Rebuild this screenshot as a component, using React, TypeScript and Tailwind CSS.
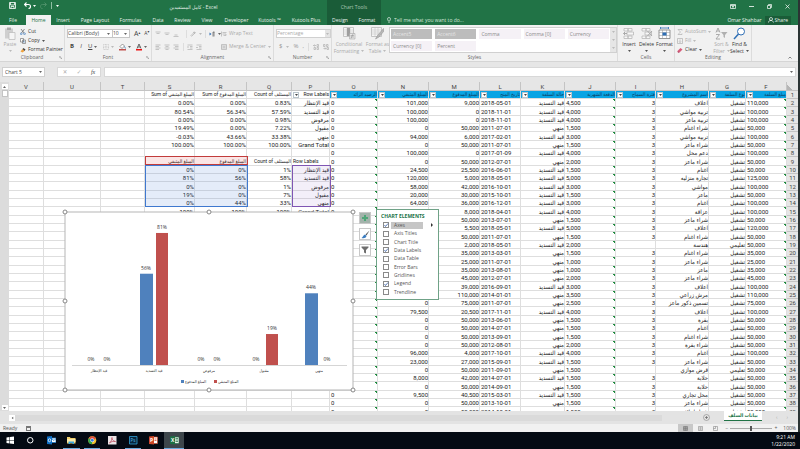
import type { ReactNode } from "react";
import clsx from "clsx";

const PAID = "قيد التسديد";
const DONE = "منهي";
const WORK = "تشغيل";
const STUDY = "تعليمي";

// remaining, paid, granted on, state, monthly, grace, project, type, amount
const loans: string[][] = [
  ["101,000", "9,000", "2018-05-01", PAID, "4,500", "3", "اعلاف", WORK, "110,000"],
  ["100,000", "0", "2018-11-01", PAID, "4,000", "3", "تربية مواشي", WORK, "100,000"],
  ["100,000", "0", "2018-11-01", PAID, "4,000", "3", "تربية ماعز", WORK, "100,000"],
  ["0", "50,000", "2011-07-01", DONE, "1,500", "3", "شراء اغنام", WORK, "50,000"],
  ["94,000", "6,000", "2017-02-01", PAID, "3,000", "3", "تربية مواشي", WORK, "100,000"],
  ["0", "50,000", "2011-07-01", DONE, "1,500", "3", "شراء ماعز", WORK, "50,000"],
  ["100,000", "0", "2017-01-09", PAID, "4,000", "3", "دعم محل", WORK, "100,000"],
  ["0", "50,000", "2012-07-01", DONE, "2,000", "3", "شراء ماعز", WORK, "50,000"],
  ["24,500", "25,500", "2016-06-01", PAID, "1,500", "3", "اغنام", WORK, "50,000"],
  ["120,000", "5,000", "2018-05-01", PAID, "5,000", "3", "تجارة منزليه", WORK, "125,000"],
  ["58,000", "42,000", "2016-10-01", PAID, "3,000", "3", "مواشي", WORK, "100,000"],
  ["20,000", "30,000", "2015-10-01", PAID, "1,500", "3", "ماعز", WORK, "50,000"],
  ["64,000", "36,000", "2016-12-01", PAID, "3,000", "3", "اغنام", WORK, "100,000"],
  ["92,000", "8,000", "2018-04-01", PAID, "4,000", "3", "عزاقة", WORK, "100,000"],
  ["0", "50,000", "2013-07-01", DONE, "1,500", "3", "شراء ماعز", WORK, "50,000"],
  ["114,500", "5,500", "2018-05-01", PAID, "5,000", "3", "اعلاف", WORK, "120,000"],
  ["0", "50,000", "2011-07-01", DONE, "1,500", "3", "شراء اغنام", WORK, "50,000"],
  ["48,000", "2,000", "2018-05-01", PAID, "2,000", "", "هندسة", STUDY, "50,000"],
  ["0", "35,000", "2013-03-01", DONE, "1,500", "3", "شراء اغنام", WORK, "35,000"],
  ["0", "25,000", "2011-07-01", DONE, "1,000", "3", "شراء ماعز", WORK, "25,000"],
  ["0", "35,000", "2013-08-01", DONE, "1,000", "3", "ماعز", WORK, "35,000"],
  ["0", "45,000", "2012-07-01", DONE, "2,000", "3", "شراء ماعز", WORK, "45,000"],
  ["61,000", "39,000", "2016-09-01", PAID, "3,000", "3", "اعلاف", WORK, "100,000"],
  ["0", "110,000", "2014-01-01", DONE, "3,500", "3", "مرش زراعي", WORK, "110,000"],
  ["0", "75,000", "2011-07-01", DONE, "2,500", "3", "تسمين ذكور ماعز", WORK, "75,000"],
  ["79,500", "20,500", "2017-11-01", PAID, "4,000", "3", "اعلاف", WORK, "100,000"],
  ["0", "50,000", "2013-06-01", DONE, "1,500", "3", "بقرة", WORK, "50,000"],
  ["0", "50,000", "2014-07-01", DONE, "1,500", "3", "اغنام", WORK, "50,000"],
  ["0", "50,000", "2013-09-01", DONE, "1,500", "3", "شراء اغنام", WORK, "50,000"],
  ["0", "50,000", "2012-08-01", DONE, "2,000", "3", "شراء بقرة", WORK, "50,000"],
  ["96,000", "4,000", "2017-10-01", PAID, "4,000", "3", "اغنام", WORK, "100,000"],
  ["23,000", "27,000", "2015-09-01", PAID, "1,500", "3", "شراء ماعز", WORK, "50,000"],
  ["0", "50,000", "2011-09-01", DONE, "1,500", "", "قرض موازي", STUDY, "50,000"],
  ["8,000", "42,000", "2014-07-01", PAID, "1,500", "3", "حلابة", WORK, "50,000"],
  ["0", "50,000", "2014-09-01", DONE, "1,500", "3", "حلابة", WORK, "50,000"],
  ["9,500", "40,500", "2015-03-01", PAID, "1,500", "3", "محل تجاري", WORK, "50,000"],
  ["0", "50,000", "2013-10-01", DONE, "1,500", "3", "شراء ماعز", WORK, "50,000"],
  ["0", "50,000", "2014-10-01", DONE, "1,500", "3", "شراء اعلاف", WORK, "50,000"],
];

// columns S, R, Q, P keyed by sheet row
const pivot: Record<number, string[]> = {
  1: ["Sum of المبلغ المتبقي", "Sum of المبلغ المدفوع", "Count of المستلف", "Row Labels"],
  2: ["0.00%", "0.00%", "0.83%", "قيد الإنتظار"],
  3: ["80.54%", "56.34%", "57.59%", "قيد التسديد"],
  4: ["0.00%", "0.00%", "0.98%", "مرفوض"],
  5: ["19.49%", "0.00%", "7.22%", "مقبول"],
  6: ["-0.03%", "43.66%", "33.38%", "منهي"],
  7: ["100.00%", "100.00%", "100.00%", "Grand Total"],
  9: ["المبلغ المتبقي", "المبلغ المدفوع", "Count of المستلف", "Row Labels"],
  10: ["0%", "0%", "1%", "قيد الإنتظار"],
  11: ["81%", "56%", "58%", "قيد التسديد"],
  12: ["0%", "0%", "1%", "مرفوض"],
  13: ["19%", "0%", "7%", "مقبول"],
  14: ["0%", "44%", "33%", "منهي"],
  15: ["100%", "100%", "100%", "Grand Total"],
};

const headers = [
  "الرصيد الزائد",
  "المبلغ المتبقي",
  "المبلغ المدفوع",
  "تاريخ المنح",
  "حالة السلفة",
  "الدفعة الشهرية",
  "فترة السماح",
  "اسم المشروع",
  "نوع السلفة",
  "مبلغ السلفة",
];

const columns = [
  { id: "V", width: "w-auto" },
  { id: "U", width: "w-[57px]" },
  { id: "T", width: "w-[44px]" },
  { id: "S", width: "w-[50px]" },
  { id: "R", width: "w-[52px]" },
  { id: "Q", width: "w-[45px]" },
  { id: "P", width: "w-[38px]" },
  { id: "O", width: "w-[48px]" },
  { id: "N", width: "w-[51px]" },
  { id: "M", width: "w-[51px]" },
  { id: "L", width: "w-[41px]" },
  { id: "K", width: "w-[44px]" },
  { id: "J", width: "w-[51px]" },
  { id: "I", width: "w-[40px]" },
  { id: "H", width: "w-[53px]" },
  { id: "G", width: "w-[37px]" },
  { id: "F", width: "w-[41px]" },
];

const tabs = [
  { label: "File", width: "w-[26px]" },
  { label: "Home", width: "w-[25px]" },
  { label: "Insert", width: "w-[24px]" },
  { label: "Page Layout", width: "w-[40px]" },
  { label: "Formulas", width: "w-[31px]" },
  { label: "Data", width: "w-[24px]" },
  { label: "Review", width: "w-[25px]" },
  { label: "View", width: "w-[24px]" },
  { label: "Developer", width: "w-[35px]" },
  { label: "Kutools ™", width: "w-[31px]" },
  { label: "Kutools Plus", width: "w-[42px]" },
  { label: "Design", width: "w-[26px]" },
  { label: "Format", width: "w-[28px]" },
];

function Svg({ w, h, box, label, children }: { w: number; h: number; box: string; label?: string; children: ReactNode }) {
  return (
    <svg width={w} height={h} viewBox={box} fill="none" aria-label={label} aria-hidden={label ? undefined : true} className="shrink-0">
      {children}
    </svg>
  );
}

function Caret({ color = "#666" }: { color?: string }) {
  return (
    <Svg w={3} h={2} box="0 0 6 4">
      <path d="M0 0h6L3 4z" fill={color} />
    </Svg>
  );
}

function TitleBar() {
  return (
    <div className="flex h-[15px] items-stretch text-white">
      <div className="flex w-[327px] items-center">
        <div className="flex w-[60px] items-center gap-1 pb-1 pl-[9px]">
          <button aria-label="Save">
            <Svg w={7} h={7} box="0 0 14 14">
              <path d="M1 1h12v12H1zM3 1v5h8V1M4 13V9h6v4" stroke="#fff" strokeWidth="1.6" />
            </Svg>
          </button>
          <button aria-label="Undo" className="ml-1 flex items-center gap-0.5">
            <Svg w={7} h={7} box="0 0 14 14">
              <path d="M5 1L1 5l4 4M1.500 5H9c3 0 4 2 4 4s-1 4-4 4" stroke="#fff" strokeWidth="2.200" />
            </Svg>
            <Caret color="#fff" />
          </button>
          <button aria-label="Redo" className="flex items-center gap-0.5">
            <Svg w={7} h={7} box="0 0 14 14">
              <path d="M9 1l4 4-4 4M12.500 5H5C2 5 1 7 1 9s1 4 4 4" stroke="#4c9068" strokeWidth="2" />
            </Svg>
          </button>
          <span className="h-[7px] w-px bg-[#8fbfa2]" />
          <Caret color="#fff" />
        </div>
        <h1 className="flex-1 text-center text-[#e3efe7]">كامل المستفيدين - Excel</h1>
      </div>
      <div className="flex w-[54px] items-center justify-center bg-[#1a5c38] text-[#a9c9b5]">Chart Tools</div>
      <div className="ml-auto flex items-center gap-[13px] pr-[8px] pb-[3px]">
        <button aria-label="Ribbon display options">
          <Svg w={6} h={5} box="0 0 12 10">
            <path d="M1 1h10v8H1zM1 3h10M6 9V5M4 6l2-2 2 2" stroke="#fff" strokeWidth="1.400" />
          </Svg>
        </button>
        <button aria-label="Minimize">
          <Svg w={5} h={5} box="0 0 10 10">
            <path d="M0 5h10" stroke="#fff" strokeWidth="1.600" />
          </Svg>
        </button>
        <button aria-label="Restore">
          <Svg w={5} h={5} box="0 0 10 10">
            <path d="M1 3h6v6H1zM3 3V1h6v6H7" stroke="#fff" strokeWidth="1.400" />
          </Svg>
        </button>
        <button aria-label="Close">
          <Svg w={5} h={5} box="0 0 10 10">
            <path d="M1 1l8 8M9 1L1 9" stroke="#fff" strokeWidth="1.400" />
          </Svg>
        </button>
      </div>
    </div>
  );
}

function TabBar() {
  return (
    <nav className="flex h-[10px] items-stretch whitespace-nowrap text-[#e8f2ec]">
      {tabs.map((tab, i) => (
        <button
          key={tab.label}
          className={clsx(tab.width, tab.label === "Home" && "bg-[#f1f1f1] text-[#217346]", i > 10 && "bg-[#1a5c38]")}
        >
          {tab.label}
        </button>
      ))}
      <label className="ml-[6px] flex items-center gap-[3px]">
        <Svg w={4} h={6} box="0 0 8 12">
          <path d="M2.500 8C2.500 6.500 1 6 1 4a3 3 0 016 0c0 2-1.500 2.500-1.500 4zM2.500 10.500h3" stroke="#fff" strokeWidth="1.200" />
        </Svg>
        <input placeholder="Tell me what you want to do..." className="w-[80px] bg-transparent placeholder:text-[#d4e6da] outline-none" />
      </label>
      <div className="ml-auto flex items-center gap-[3px] pr-[7px]">
        <span>Omar Shahbar</span>
        <button className="flex h-[9px] items-center gap-px bg-[#1a5c38] px-[3px]">
          <Svg w={6} h={6} box="0 0 12 12">
            <circle cx="6" cy="4" r="3" stroke="#fff" strokeWidth="1.400" />
            <path d="M1 11c0-3 2-4 5-4 2 0 4 1 5 4" stroke="#fff" strokeWidth="1.400" />
          </Svg>
          Share
        </button>
      </div>
    </nav>
  );
}

function Group({ label, width, launcher, children }: { label: string; width: string; launcher?: boolean; children: ReactNode }) {
  return (
    <section className={clsx("flex flex-col border-r border-[#dcdcdc]", width)}>
      <div className="flex flex-1 items-start pt-[2px]">{children}</div>
      <div className="relative h-[7px] text-center text-[#666]">
        {label}
        {launcher && (
          <span className="absolute right-[2px] top-[2px]">
            <Svg w={3} h={3} box="0 0 6 6">
              <path d="M0.500 4V0.500H4M2 2l3.500 3.500M5.500 3v2.500H3" stroke="#888" />
            </Svg>
          </span>
        )}
      </div>
    </section>
  );
}

function Tool({ icon, label, muted, caret }: { icon: ReactNode; label: string; muted?: boolean; caret?: boolean }) {
  return (
    <button className={clsx("flex h-[9px] items-center gap-[2px] whitespace-nowrap", muted ? "text-[#aaa]" : "text-[#333]")}>
      {icon}
      {label}
      {caret && <Caret color={muted ? "#bbb" : "#555"} />}
    </button>
  );
}

function BigTool({ icon, lines, muted, width }: { icon: ReactNode; lines: string[]; muted?: boolean; width: string }) {
  return (
    <button className={clsx("flex flex-col items-center leading-[7px] whitespace-nowrap", width, muted ? "text-[#aaa]" : "text-[#333]")}>
      <span className="mb-px">{icon}</span>
      {lines[0]}
      <span className="flex h-[6px] items-center gap-[2px]">
        {lines[1]}
        <Caret color={muted ? "#bbb" : "#555"} />
      </span>
    </button>
  );
}

function LinesIcon({ d }: { d: string }) {
  return (
    <Svg w={6} h={6} box="0 0 12 12">
      <path d={d} stroke="#b0b0b0" strokeWidth="1.400" />
    </Svg>
  );
}

function CellsIcon({ accent, mark }: { accent: string; mark: string }) {
  return (
    <Svg w={12} h={13} box="0 0 24 26">
      <path d="M2 3h8v5H2zM10 3h8v5h-8zM2 18h8v5H2zM10 18h8v5h-8zM8 10h13v6H8z" stroke="#b5b5b5" strokeWidth="1.500" fill="#f7f7f7" />
      <path d={mark} stroke={accent} strokeWidth="2" />
    </Svg>
  );
}

function TableIcon({ overlay }: { overlay: ReactNode }) {
  return (
    <Svg w={13} h={13} box="0 0 26 26">
      <path d="M1 1h20v18H1z" fill="#f6f6f6" stroke="#b5b5b5" strokeWidth="1.500" />
      <path d="M1 6h20M1 10h20M1 14h20M8 1v18M14 1v18" stroke="#bdbdbd" />
      {overlay}
    </Svg>
  );
}

function Ribbon() {
  return (
    <div className="flex h-[37px] border-b border-[#d5d5d5] bg-[#f1f1f1]">
      <Group label="Clipboard" width="w-[65px]" launcher>
        <BigTool
          width="w-[20px]"
          muted
          lines={["Paste", ""]}
          icon={
            <Svg w={12} h={13} box="0 0 24 26">
              <path d="M2 3h16v20H2z" fill="#cfcfcf" />
              <path d="M6 1h8v5H6z" fill="#a8a8a8" />
              <path d="M10 11h12v14H10z" fill="#f5f5f5" stroke="#bbb" strokeWidth="1.500" />
            </Svg>
          }
        />
        <div className="flex flex-col">
          <Tool
            label="Cut"
            icon={
              <Svg w={6} h={6} box="0 0 12 12">
                <path d="M2 0l6 8M9 0L3 8" stroke="#555" strokeWidth="1.300" />
                <circle cx="2.500" cy="9.500" r="1.800" stroke="#2f6fb5" strokeWidth="1.200" />
                <circle cx="9" cy="9.500" r="1.800" stroke="#2f6fb5" strokeWidth="1.200" />
              </Svg>
            }
          />
          <Tool
            label="Copy"
            caret
            icon={
              <Svg w={6} h={6} box="0 0 12 12">
                <path d="M1 1h6v7H1zM5 4h6v7H5z" fill="#fff" stroke="#666" strokeWidth="1.200" />
                <path d="M6.500 6.500h3M6.500 8.500h3" stroke="#2f6fb5" />
              </Svg>
            }
          />
          <Tool
            label="Format Painter"
            icon={
              <Svg w={6} h={6} box="0 0 12 12">
                <path d="M1 9l4-5 4 4-4 3z" fill="#f0a23c" />
                <path d="M5 4l2-2 4 3-2 3z" fill="#444" />
              </Svg>
            }
          />
        </div>
      </Group>

      <Group label="Font" width="w-[87px]" launcher>
        <div className="flex flex-col gap-[4px] pt-[2px] pl-[2px]">
          <div className="flex items-center">
            <div className="flex h-[9px] w-[46px] items-center border border-[#c6c6c6] bg-white pr-[2px]">
              <select aria-label="Font name" className="h-[7px] min-w-0 flex-1 appearance-none text-[#444]">
                <option>Calibri (Body)</option>
              </select>
              <Caret />
            </div>
            <div className="-ml-px flex h-[9px] w-[18px] items-center border border-[#c6c6c6] bg-white pr-[2px]">
              <select aria-label="Font size" className="h-[7px] min-w-0 flex-1 appearance-none text-[#444]">
                <option>10</option>
              </select>
              <Caret />
            </div>
            <button className="ml-1 text-[7px] text-[#444]">A<sup className="text-[4px]">▴</sup></button>
            <button className="ml-1 text-[#444]">A<sup className="text-[4px]">▾</sup></button>
          </div>
          <div className="flex h-[9px] items-center gap-[5px] pl-[3px] text-[6px] text-[#444]">
            <button className="font-bold">B</button>
            <button className="w-[4px] italic">I</button>
            <button className="flex items-center gap-[2px] underline">U<Caret /></button>
            <button aria-label="Borders" className="ml-px flex items-center gap-[2px]">
              <Svg w={6} h={6} box="0 0 12 12">
                <path d="M1 1h10v10H1zM6 1v10M1 6h10" stroke="#b5b5b5" strokeDasharray="2 1" />
              </Svg>
              <Caret color="#bbb" />
            </button>
            <button aria-label="Fill color" className="flex items-center gap-[2px]">
              <Svg w={7} h={8} box="0 0 14 16">
                <path d="M2 7l5-5 4 4-5 5z" fill="#fff" stroke="#666" strokeWidth="1.300" />
                <path d="M11 7l2 4" stroke="#2f6fb5" strokeWidth="1.500" />
                <path d="M0 12h14v3H0z" fill="#c0504d" />
              </Svg>
              <Caret />
            </button>
            <button aria-label="Font color" className="flex items-center gap-[2px]">
              <Svg w={6} h={8} box="0 0 12 16">
                <path d="M2 11l4-9 4 9M3.500 8h5" stroke="#444" strokeWidth="1.600" />
                <path d="M0 12h12v3H0z" fill="#e11" />
              </Svg>
              <Caret />
            </button>
          </div>
        </div>
      </Group>

      <Group label="Alignment" width="w-[122px]" launcher>
        <div className="flex flex-col gap-[4px] pt-[2px] pl-[3px]">
          <div className="flex h-[9px] items-center gap-[3px]">
            <LinesIcon d="M1 2h10M3 5h6" />
            <LinesIcon d="M1 4h10M3 7h6" />
            <LinesIcon d="M3 8h6M1 11h10" />
            <span className="ml-1 h-[8px] w-px bg-[#ddd]" />
            <LinesIcon d="M1 10l8-8M3 11l8-8M6 3l4-1-1 4" />
            <Caret color="#bbb" />
            <span className="h-[8px] w-px bg-[#ddd]" />
            <Svg w={6} h={6} box="0 0 12 12">
              <path d="M1 3l4 3-4 3z" fill="#2f6fb5" />
              <path d="M8 2v9M10 2v9M11 2H8" stroke="#555" strokeWidth="1.300" />
            </Svg>
            <Caret />
          </div>
          <div className="flex h-[9px] items-center gap-[3px]">
            <LinesIcon d="M1 2h10M1 5h7M1 8h10M1 11h7" />
            <LinesIcon d="M1 2h10M3 5h6M1 8h10M3 11h6" />
            <LinesIcon d="M1 2h10M4 5h7M1 8h10M4 11h7" />
            <span className="ml-px h-[8px] w-px bg-[#ddd]" />
            <LinesIcon d="M1 2h10M6 5h5M6 8h5M1 11h10M4 6H0" />
            <LinesIcon d="M1 2h10M6 5h5M6 8h5M1 11h10M0 7h4" />
          </div>
        </div>
        <div className="ml-auto flex w-[54px] flex-col gap-[4px] pt-[2px]">
          <Tool muted label="Wrap Text" icon={<LinesIcon d="M1 1v10M3 3h8M3 6h7v3H5" />} />
          <Tool muted caret label="Merge & Center" icon={<LinesIcon d="M1 1h10v10H1zM1 4h10M1 8h10M4 6h4" />} />
        </div>
      </Group>

      <Group label="Number" width="w-[58px]" launcher>
        <div className="flex w-full flex-col gap-[4px] pt-[2px] pl-[2px]">
          <div className="flex items-center border border-[#d0d0d0] bg-white">
            <select aria-label="Number format" disabled className="h-[7px] min-w-0 flex-1 appearance-none text-[#aaa] opacity-100">
              <option>Percentage</option>
            </select>
            <span className="flex h-[7px] w-[5px] items-center justify-center bg-[#e4e4e4]"><Caret color="#bbb" /></span>
          </div>
          <div className="flex h-[9px] items-center gap-[4px] pl-[3px] text-[6px] text-[#999]">
            <button>$</button>
            <Caret color="#bbb" />
            <button>%</button>
            <button>,</button>
            <span className="h-[8px] w-px bg-[#ddd]" />
            <button aria-label="Increase decimal">
              <LinesIcon d="M6 3H1M3 1L1 3l2 2M8 1h3v4H8zM2 7h3v4H2zM8 7h3v4H8z" />
            </button>
            <button aria-label="Decrease decimal">
              <LinesIcon d="M1 1h3v4H1zM7 1h3v4H7zM1 9h5M4 7l2 2-2 2M8 7h3v4H8z" />
            </button>
          </div>
        </div>
      </Group>

      <Group label="Styles" width="flex-1">
        <BigTool
          muted
          width="w-[34px]"
          lines={["Conditional", "Formatting"]}
          icon={
            <TableIcon
              overlay={
                <>
                  <path d="M8 2h6v16H8z" fill="#9e9e9e" />
                  <path d="M13 13h11v11H13z" fill="#e8e8e8" stroke="#999" />
                  <path d="M15 17h7M15 20h7M20 14l-4 9" stroke="#888" />
                </>
              }
            />
          }
        />
        <BigTool
          muted
          width="w-[23px]"
          lines={["Format as", "Table"]}
          icon={<TableIcon overlay={<path d="M25 3L13 17l-4 7 7-4L26 8z" fill="#b8b8b8" stroke="#8e8e8e" />} />}
        />
        <div className="flex flex-1 border border-[#d0d0d0] bg-white">
          <div className="grid flex-1 grid-cols-5 gap-x-[3px] gap-y-[2px] p-px text-[#8a8a8a]">
            {["Accent5", "Accent6", "Comma", "Comma [0]", "Currency", "Currency [0]", "Percent"].map((name, i) => (
              <button key={name} className={clsx("h-[10px] px-[2px] text-left", i < 2 ? "bg-[#bcbcbc] text-[#e6e6e6]" : "bg-[#f5f1f6]")}>
                {name}
              </button>
            ))}
          </div>
          <div className="flex w-[6px] flex-col items-center justify-around bg-[#e6e6e6]">
            <Caret color="#bbb" />
            <Caret color="#bbb" />
            <Caret color="#bbb" />
          </div>
        </div>
      </Group>

      <Group label="Cells" width="w-[57px]">
        <div className="flex pl-[3px]">
          <BigTool width="w-[16px]" lines={["Insert", ""]} icon={<CellsIcon accent="#a9a9a9" mark="M8 13H1M4 10l-3 3 3 3" />} />
          <BigTool width="w-[19px]" lines={["Delete", ""]} icon={<CellsIcon accent="#a9a9a9" mark="M13 8l9 10M22 8l-9 10" />} />
          <BigTool
            width="w-[17px]"
            lines={["Format", ""]}
            icon={
              <Svg w={13} h={13} box="0 0 26 26">
                <path d="M2 6h22v17H2z" fill="#fff" stroke="#777" strokeWidth="1.500" />
                <path d="M2 11h22M2 17h22M9 6v17M17 6v17" stroke="#999" />
                <path d="M9 11h8v6H9z" fill="#2f6fb5" />
                <path d="M5 2h16M5 0v4M21 0v4" stroke="#2f6fb5" strokeWidth="1.600" />
              </Svg>
            }
          />
        </div>
      </Group>

      <Group label="Editing" width="w-[77px]">
        <div className="flex w-[37px] flex-col pl-[2px]">
          <Tool muted caret label="AutoSum" icon={<LinesIcon d="M10 3V1H2l5 5-5 5h8V9" />} />
          <Tool muted caret label="Fill" icon={<LinesIcon d="M1 1h10v10H1zM6 3v6M4 7l2 2 2-2" />} />
          <Tool
            caret
            label="Clear"
            icon={
              <Svg w={6} h={6} box="0 0 12 12">
                <path d="M1 8l6-6 4 3-6 6H2z" fill="#d65b79" />
                <path d="M1 8l4 3H2z" fill="#9c3b5a" />
              </Svg>
            }
          />
        </div>
        <BigTool
          muted
          width="w-[19px]"
          lines={["Sort &", "Filter"]}
          icon={
            <Svg w={13} h={13} box="0 0 26 26">
              <path d="M2 11L6 2l4 9M3.500 8h5M2 15h7l-7 9h8" stroke="#a3a3a3" strokeWidth="1.800" />
              <path d="M12 10h13l-5 6v6l-3-2v-4z" fill="#b0b0b0" />
            </Svg>
          }
        />
        <BigTool
          width="w-[17px]"
          lines={["Find &", "Select"]}
          icon={
            <Svg w={13} h={13} box="0 0 26 26">
              <circle cx="16" cy="9" r="7" stroke="#2f6fb5" strokeWidth="2" fill="#fff" />
              <path d="M11 14L2 24" stroke="#2f6fb5" strokeWidth="3" />
            </Svg>
          }
        />
      </Group>
      <button aria-label="Collapse the ribbon" className="flex w-[46px] items-end justify-end pr-[6px] pb-[2px]">
        <Svg w={4} h={3} box="0 0 8 6">
          <path d="M1 5l3-3 3 3" stroke="#555" strokeWidth="1.400" />
        </Svg>
      </button>
    </div>
  );
}

function FormulaBar() {
  return (
    <div className="flex h-[20px] items-center gap-[3px] bg-[#e6e6e6] pr-[2px] pl-[2px]">
      <div className="mr-[9px] flex h-[10px] w-[43px] items-center border border-[#d0d0d0] bg-white pr-[2px]">
        <input aria-label="Name box" defaultValue="Chart 5" className="w-full min-w-0 px-[2px] text-[#444] outline-none" />
        <Caret />
      </div>
      <div className="flex h-[10px] w-[44px] items-center justify-around border border-[#d8d8d8] bg-white text-[6px] text-[#aaa]">
        <button aria-label="Cancel">✕</button>
        <button aria-label="Enter">✓</button>
        <button aria-label="Insert function" className="font-['Liberation_Serif',serif] text-[#444] italic">fx</button>
      </div>
      <div className="flex h-[10px] flex-1 items-center border border-[#d8d8d8] bg-white pr-[2px]">
        <input aria-label="Formula" className="h-full flex-1 outline-none" />
        <Caret />
      </div>
    </div>
  );
}

function FilterButton() {
  return (
    <button aria-label="Filter" className="flex h-[6px] w-[6px] shrink-0 items-center justify-center border border-[#b9c4cc] bg-white">
      <Caret color="#444" />
    </button>
  );
}

// left aligned numbers are stored as text and carry the green corner flag
const textNumber = "text-left bg-[linear-gradient(225deg,#1f8b3f_2px,transparent_2px)]";

function SheetRow({ row }: { row: number }) {
  const loan = loans[row - 2];
  const side = pivot[row];
  const heading = row === 1 || row === 9;
  return (
    <tr className="h-[8px] nth-[3n]:h-[9px] [&>td]:border-r [&>td]:border-b [&>td]:border-[#dedede] [&>td]:pl-px">
      <td />
      <td />
      <td />
      {[0, 1, 2, 3].map((c) => (
        <td key={c} className={clsx(c === 3 && row === 9 ? "text-left" : "text-right", heading && "text-[5px]")}>
          {row === 1 && c === 3 ? (
            <div className="flex items-center justify-between">
              <FilterButton />
              {side[c]}
            </div>
          ) : (
            side?.[c]
          )}
        </td>
      ))}
      {row === 1 ? (
        headers.map((text) => (
          <td key={text} className="bg-[#0aa4e4] text-[5px] text-[#0c3a5c]">
            <div className="flex items-center justify-between">
              <FilterButton />
              {text}
            </div>
          </td>
        ))
      ) : (
        <>
          <td className={textNumber}>0</td>
          <td className="text-right">{loan[0]}</td>
          <td className="text-right">{loan[1]}</td>
          <td className="text-left">{loan[2]}</td>
          <td className="text-right">{loan[3]}</td>
          <td className={textNumber}>{loan[4]}</td>
          <td className="text-right">{loan[5]}</td>
          <td className="text-right">{loan[6]}</td>
          <td className="text-right">{loan[7]}</td>
          <td className={textNumber}>{loan[8]}</td>
        </>
      )}
      <th className="border-b border-[#c4c4c4] bg-[#e6e6e6] font-normal text-[#444]">{row}</th>
    </tr>
  );
}

const bars = [
  { name: "قيد الإنتظار", paid: 0, left: 0 },
  { name: "قيد التسديد", paid: 56, left: 81 },
  { name: "مرفوض", paid: 0, left: 0 },
  { name: "مقبول", paid: 0, left: 19 },
  { name: "منهي", paid: 44, left: 0 },
];

function LoanChart() {
  const base = 153;
  const scale = 1.63;
  return (
    <svg viewBox="0 0 288 178" className="absolute top-[130px] left-[65px] w-[288px] overflow-visible" role="img" aria-label="Loan chart">
      <rect width="288" height="178" fill="#fff" stroke="#b5b5b5" />
      <path d="M7 153.500H282" stroke="#d5d5d5" />
      {bars.map((bar, i) => {
        const x = 20 + i * 55;
        return (
          <g key={bar.name} fontSize="5" fill="#333" textAnchor="middle">
            <rect x={x} y={base - bar.paid * scale} width="13" height={bar.paid * scale} fill="#4f81bd" />
            <rect x={x + 16} y={base - bar.left * scale} width="12" height={bar.left * scale} fill="#c0504d" />
            <text x={x + 6} y={base - bar.paid * scale - 4}>{bar.paid}%</text>
            <text x={x + 22} y={base - bar.left * scale - 4}>{bar.left}%</text>
            <text x={x + 14} y="160" fontSize="4">{bar.name}</text>
          </g>
        );
      })}
      <g fontSize="4" fill="#333">
        <rect x="116" y="168" width="3" height="3" fill="#4f81bd" />
        <text x="120" y="171">المبلغ المدفوع</text>
        <rect x="149" y="168" width="3" height="3" fill="#c0504d" />
        <text x="153" y="171">المبلغ المتبقي</text>
      </g>
      {[0, 144, 288].flatMap((x) =>
        [0, 89, 178].map((y) =>
          x === 144 && y === 89 ? null : <circle key={`${x}-${y}`} cx={x} cy={y} r="2" fill="#fff" stroke="#888" />
        )
      )}
    </svg>
  );
}

const elements = [
  { name: "Axes", on: true },
  { name: "Axis Titles", on: false },
  { name: "Chart Title", on: false },
  { name: "Data Labels", on: true },
  { name: "Data Table", on: false },
  { name: "Error Bars", on: false },
  { name: "Gridlines", on: false },
  { name: "Legend", on: true },
  { name: "Trendline", on: false },
];

function ChartFlyout() {
  const button = "flex h-[12px] w-[12px] items-center justify-center border border-[#c8c8c8]";
  return (
    <div className="absolute top-[127px] left-[359px] flex gap-[5px]">
      <div className="flex flex-col gap-[4px] pt-[3px]">
        <button aria-label="Chart elements" className={clsx(button, "bg-[#a3b3ab]")}>
          <Svg w={6} h={6} box="0 0 12 12">
            <path d="M6 0v12M0 6h12" stroke="#4fa678" strokeWidth="4" />
          </Svg>
        </button>
        <button aria-label="Chart styles" className={clsx(button, "bg-white")}>
          <Svg w={9} h={9} box="0 0 18 18">
            <path d="M17 1L9 9l2 2z" fill="#555" />
            <path d="M8 9l3 3c-1 4-5 5-10 4 3-1 3-6 7-7z" fill="#3b7cc0" />
          </Svg>
        </button>
        <button aria-label="Chart filters" className={clsx(button, "bg-white")}>
          <Svg w={8} h={8} box="0 0 16 16">
            <path d="M1 1h14v2l-5 5v7l-4-2V8L1 3z" fill="#6d6d6d" />
          </Svg>
        </button>
      </div>
      <fieldset className="h-[91px] w-[63px] border border-[#6fa287] bg-white pt-[2px] pl-[4px] whitespace-nowrap">
        <h2 className="mb-px leading-[8px] font-bold text-[#217346]">CHART ELEMENTS</h2>
        {elements.map((el) => (
          <label key={el.name} className="flex h-[8px] items-center gap-[2px] text-[#555] nth-[3n]:h-[9px]">
            <span className="relative ml-[2px] h-[6px] w-[6px]">
              <input type="checkbox" defaultChecked={el.on} className="peer block h-[6px] w-[6px] appearance-none border border-[#8a8a8a] bg-white" />
              <span className="absolute inset-0 hidden peer-checked:block">
                <Svg w={6} h={6} box="0 0 12 12">
                  <path d="M3 6l2 3 5-6" stroke="#3b62a8" strokeWidth="1.600" />
                </Svg>
              </span>
            </span>
            <span className={clsx("w-[32px] pl-[3px]", el.name === "Axes" && "bg-[#c6c6c6]")}>{el.name}</span>
            {el.name === "Axes" && (
              <span className="ml-[6px]">
                <Svg w={2} h={4} box="0 0 4 8">
                  <path d="M0 0l4 4-4 4z" fill="#333" />
                </Svg>
              </span>
            )}
          </label>
        ))}
      </fieldset>
    </div>
  );
}

function Sheet() {
  return (
    <main className="relative flex flex-1 overflow-hidden bg-white">
      <div className="flex w-[9px] shrink-0 flex-col items-center justify-between bg-[#dcdcdc] pt-[2px] pb-px">
        <div className="flex flex-col gap-px">
          <button aria-label="Scroll up" className="flex h-[5px] w-[6px] items-center justify-center bg-white">
            <span className="rotate-180"><Caret /></span>
          </button>
          <span className="h-[7px] w-[6px] border border-[#c4c4c4] bg-white" />
        </div>
        <button aria-label="Scroll down" className="flex h-[5px] w-[6px] items-center justify-center bg-white">
          <Caret />
        </button>
      </div>
      <div className="flex-1">
        <table className="w-full table-fixed border-separate border-spacing-0 font-[Roboto,'DejaVu_Sans_Condensed',sans-serif] text-[6px] leading-[7px] whitespace-nowrap text-[#222]">
          <colgroup>
            {columns.map((col) => (
              <col key={col.id} className={col.width} />
            ))}
            <col className="w-[11px]" />
          </colgroup>
          <thead>
            <tr className="h-[9px] bg-[#e6e6e6] text-[#444]">
              {columns.map((col) => (
                <th key={col.id} className="border-r border-b border-[#c4c4c4] font-normal">{col.id}</th>
              ))}
              <th aria-label="Select all" className="border-b border-[#c4c4c4] bg-[linear-gradient(45deg,#b5b5b5_4px,transparent_4px)]" />
            </tr>
          </thead>
          <tbody>
            {Array.from({ length: 39 }, (_, i) => (
              <SheetRow key={i} row={i + 1} />
            ))}
          </tbody>
        </table>
      </div>
      {/* ranges that feed the chart */}
      <div className="absolute top-[74px] left-[145px] h-[9px] w-[103px] border border-[#c23b3b] bg-[#e05050]/15" />
      <div className="absolute top-[83px] left-[145px] h-[42px] w-[103px] border border-[#3f78cf] bg-[#4a7fd6]/15" />
      <div className="absolute top-[83px] left-[292px] h-[42px] w-[39px] border border-[#7f56b3] bg-[#8c5fc0]/10" />
      <LoanChart />
      <ChartFlyout />
    </main>
  );
}

function Footer() {
  return (
    <footer className="text-[#555]">
      <div className="flex h-[13px] items-center bg-[#e3e3e3] pl-[9px]">
        <button aria-label="Scroll left" className="flex h-[6px] w-[6px] items-center justify-center bg-white">
          <span className="rotate-90"><Caret /></span>
        </button>
        <div className="h-[6px] flex-1 bg-[#dadada]" />
        <div className="flex w-[136px] items-center justify-end gap-[14px] self-stretch pr-[10px]">
          <button aria-label="New sheet">
            <Svg w={7} h={7} box="0 0 14 14">
              <circle cx="7" cy="7" r="6" stroke="#777" />
              <path d="M7 4v6M4 7h6" stroke="#666" strokeWidth="1.400" />
            </Svg>
          </button>
          <button className="h-[10px] w-[38px] self-start border-b border-[#217346] bg-white font-bold text-[#217346]">بيانات السلف</button>
          <span className="flex gap-[9px] text-[#aaa]"><span>‹</span><span>›</span></span>
        </div>
      </div>
      <div className="flex h-[8px] items-center bg-[#f1f1f1] pr-[2px] pl-[3px]">
        <span>Ready</span>
        <span className="ml-[9px] h-[5px] w-[5px] border border-t-2 border-[#777]" />
        <div className="ml-auto flex items-center self-stretch">
          <button aria-label="Normal view" className="flex w-[15px] items-center justify-center self-stretch bg-[#c8c8c8]">
            <Svg w={5} h={5} box="0 0 10 10"><path d="M1 1h8v8H1zM1 4h8M1 6h8M4 1v8M6 1v8" stroke="#666" /></Svg>
          </button>
          <button aria-label="Page layout" className="ml-[5px]">
            <Svg w={5} h={5} box="0 0 10 10"><path d="M1 1h8v8H1zM3 3h4M3 5h4M3 7h4" stroke="#777" /></Svg>
          </button>
          <button aria-label="Page break preview" className="ml-[10px]">
            <Svg w={5} h={5} box="0 0 10 10"><path d="M1 1h8v8H1zM1 5h4V1" stroke="#777" /></Svg>
          </button>
          <span className="ml-[8px]">−</span>
          <input
            type="range"
            aria-label="Zoom"
            className="mx-[2px] h-[5px] w-[42px] appearance-none bg-[linear-gradient(#aaa,#aaa)] bg-[length:100%_1px] bg-center bg-no-repeat [&::-webkit-slider-thumb]:h-[5px] [&::-webkit-slider-thumb]:w-[2px] [&::-webkit-slider-thumb]:appearance-none [&::-webkit-slider-thumb]:bg-[#555]"
          />
          <span>+</span>
          <span className="ml-[6px]">100%</span>
        </div>
      </div>
    </footer>
  );
}

const apps: { name: string; open?: boolean; active?: boolean; icon: ReactNode }[] = [
  { name: "Start", icon: <path d="M1 3l6-1v6H1zM8 2l8-1v7H8zM1 9h6v6l-6-1zM8 9h8v7l-8-1z" fill="#fff" /> },
  { name: "Cortana", icon: <circle cx="8.500" cy="8.500" r="5.500" stroke="#fff" strokeWidth="2" /> },
  {
    name: "Outlook",
    icon: (
      <>
        <path d="M9 4h9v9H9z" fill="#fff" stroke="#1b78c8" strokeWidth="1.500" />
        <path d="M9 5l5 4 4-4" stroke="#1b78c8" strokeWidth="1.500" />
        <path d="M0 1l10-1v17L0 16z" fill="#0f6fc5" />
        <ellipse cx="5" cy="8.500" rx="2.500" ry="3" stroke="#fff" strokeWidth="1.600" />
      </>
    ),
  },
  {
    name: "File Explorer",
    open: true,
    icon: (
      <>
        <path d="M0 2h6l1 2h10v11H0z" fill="#f1cf6b" />
        <path d="M0 6h17v6H0z" fill="#fbe9a9" />
        <path d="M3 16v-5h11v5h-3v-2H6v2z" fill="#3aa5dd" />
      </>
    ),
  },
  {
    name: "Chrome",
    open: true,
    icon: (
      <>
        <circle cx="8.500" cy="8.500" r="8" fill="#f2c230" />
        <path d="M8.500 8.500L1.600 4.500A8 8 0 0116 5.500z" fill="#dd4b3e" />
        <path d="M8.500 8.500L1.600 4.500A8 8 0 008 16.500z" fill="#2da44f" />
        <circle cx="8.500" cy="8.500" r="3.800" fill="#fff" />
        <circle cx="8.500" cy="8.500" r="2.900" fill="#3d7de0" />
      </>
    ),
  },
  {
    name: "Acrobat",
    icon: (
      <>
        <path d="M0 0h17v17H0z" fill="#ece4e6" />
        <path d="M3 14c3-3 6-8 5-11-2 2 3 8 7 8-4-1-9 0-12 3z" stroke="#b5364a" strokeWidth="1.300" />
      </>
    ),
  },
  {
    name: "Photoshop",
    open: true,
    icon: (
      <>
        <path d="M1 1h15v15H1z" fill="#07243c" stroke="#31a8e0" strokeWidth="1.500" />
        <text x="3" y="12" fontSize="9" fill="#5cc3f2">Ps</text>
      </>
    ),
  },
  {
    name: "PowerPoint",
    icon: (
      <>
        <path d="M9 2h8v13H9z" fill="#fff" stroke="#d04727" strokeWidth="1.300" />
        <path d="M11 6h4M11 9h4" stroke="#d04727" strokeWidth="1.500" />
        <path d="M0 1l10-1v17L0 16z" fill="#d04727" />
        <text x="2" y="12" fontSize="10" fontWeight="700" fill="#fff">P</text>
      </>
    ),
  },
  {
    name: "Excel",
    open: true,
    active: true,
    icon: (
      <>
        <path d="M9 2h9v13H9z" fill="#e9f3ec" stroke="#217346" strokeWidth="1.300" />
        <path d="M11 5h5M11 8h5M11 11h5" stroke="#217346" strokeWidth="1.500" />
        <path d="M0 1l10-1v17L0 16z" fill="#1d7044" />
        <text x="2" y="12" fontSize="10" fontWeight="700" fill="#fff">X</text>
      </>
    ),
  },
];

function Taskbar() {
  return (
    <div className="flex h-[17px] shrink-0 items-stretch bg-[#040a13] text-white">
      {apps.map((app) => (
        <button
          key={app.name}
          aria-label={app.name}
          className={clsx(
            "flex items-center justify-center border-b",
            app.active ? "w-[20px] bg-[#3d464b]" : "mx-[2px] w-[16px] even:w-[17px]",
            app.open ? "border-[#6aa9de]" : "border-transparent"
          )}
        >
          <Svg w={9} h={9} box="0 0 18 18">{app.icon}</Svg>
        </button>
      ))}
      <div className="ml-auto flex flex-col justify-center pr-[5px] text-right leading-[7px]">
        <time>9:21 AM</time>
        <time>1/22/2020</time>
      </div>
    </div>
  );
}

export default function App() {
  return (
    <div className="flex h-screen flex-col overflow-hidden bg-[#2b3434] font-['Open_Sans','DejaVu_Sans_Condensed',sans-serif] text-[5px] leading-[7px]">
      <div className="mr-[2px] flex min-h-0 flex-1 flex-col bg-[#e6e6e6]">
        <header className="bg-[#217346]">
          <TitleBar />
          <TabBar />
        </header>
        <Ribbon />
        <FormulaBar />
        <Sheet />
        <Footer />
      </div>
      <Taskbar />
    </div>
  );
}
